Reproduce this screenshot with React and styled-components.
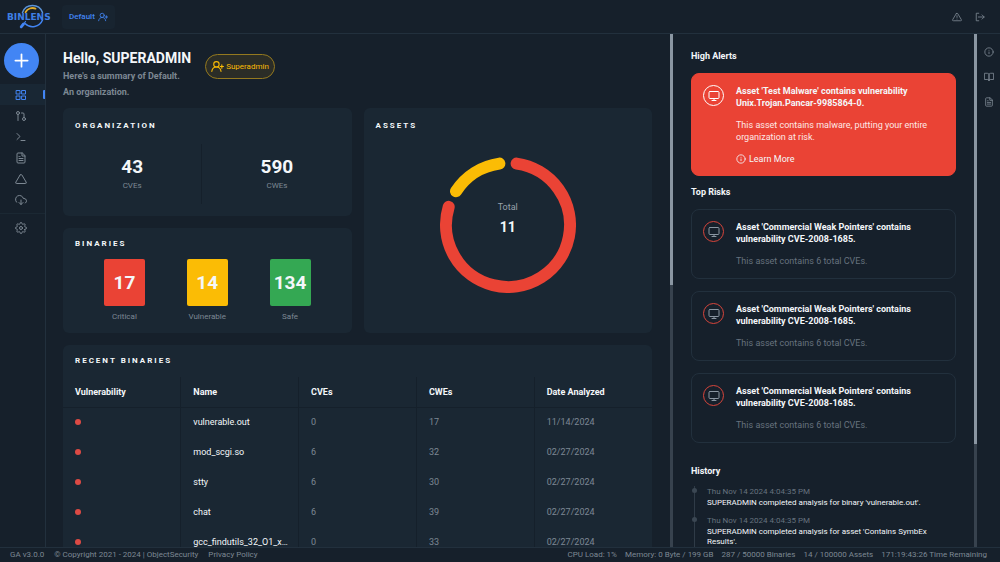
import React from "react";
import styled, { createGlobalStyle, css } from "styled-components";
import {
  FiAlertTriangle,
  FiBookOpen,
  FiDownloadCloud,
  FiFileText,
  FiGitPullRequest,
  FiGrid,
  FiInfo,
  FiMonitor,
  FiPlus,
  FiSettings,
  FiTerminal,
  FiTriangle,
} from "react-icons/fi";

const colors = {
  bg: "#16202b",
  card: "#1a2733",
  line: "#22303d",
  groove: "#15202b",
  text: "#f4f7fa",
  muted: "#7d8893",
  dim: "#66727e",
  blue: "#4285f4",
  red: "#ea4335",
  yellow: "#fbbc05",
  green: "#34a853",
};

const binaries = [
  { name: "vulnerable.out", cves: 0, cwes: 17, date: "11/14/2024" },
  { name: "mod_scgi.so", cves: 6, cwes: 32, date: "02/27/2024" },
  { name: "stty", cves: 6, cwes: 30, date: "02/27/2024" },
  { name: "chat", cves: 6, cwes: 39, date: "02/27/2024" },
  { name: "gcc_findutils_32_O1_xargs", cves: 0, cwes: 33, date: "02/27/2024" },
];

const levels = [
  { label: "Critical", value: 17, color: colors.red },
  { label: "Vulnerable", value: 14, color: colors.yellow },
  { label: "Safe", value: 134, color: colors.green },
];

const navItems = [
  { label: "Dashboard", icon: FiGrid, active: true },
  { label: "Pipelines", icon: FiGitPullRequest },
  { label: "Terminal", icon: FiTerminal },
  { label: "Reports", icon: FiFileText },
  { label: "Alerts", icon: FiTriangle },
  { label: "Downloads", icon: FiDownloadCloud },
];

const risks = [1, 2, 3];

const history = [
  {
    time: "Thu Nov 14 2024 4:04:35 PM",
    text: "SUPERADMIN completed analysis for binary 'vulnerable.out'.",
  },
  {
    time: "Thu Nov 14 2024 4:04:35 PM",
    text: "SUPERADMIN completed analysis for asset 'Contains SymbEx Results'.",
  },
];

const Logo = () => (
  <svg width="44" height="26" viewBox="0 0 44 26" role="img" aria-label="Binlens">
    <g fill="none" strokeLinecap="round">
      <path d="M15.500 8.500A10.700 10.700 0 0 1 35.500 8.500" stroke="#5b93d8" strokeWidth="1.500" />
      <path d="M35.500 16A10.700 10.700 0 0 1 18 19.500" stroke="#4285f4" strokeWidth="1.500" />
      <path d="M18.500 8.200A8 8 0 0 1 28.500 4.600" stroke="#e0ac2b" strokeWidth="1.800" />
      <path d="M16.500 20L14.200 22.800" stroke="#4285f4" strokeWidth="2.800" />
      <path d="M18.500 17.500L17 19.500" stroke="#4285f4" strokeWidth="1.200" />
    </g>
    <text
      x="0"
      y="16"
      fontFamily="'DejaVu Sans', sans-serif"
      fontWeight="700"
      fontSize="9"
      fill="#3f7fe4"
    >
      BINLENS
    </text>
  </svg>
);

const UserAdd = ({ size }) => (
  <svg
    width={size}
    height={size}
    viewBox="0 0 24 24"
    fill="none"
    stroke="currentColor"
    strokeWidth="2"
    strokeLinecap="round"
    strokeLinejoin="round"
    aria-hidden="true"
  >
    <circle cx="10" cy="8" r="5" />
    <path d="M1.5 21c.6-4.800 4.200-8 8.500-8s7.900 3.200 8.500 8" />
    <path d="M20 9v6M17 12h6" />
  </svg>
);

const Exit = () => (
  <svg
    width="10"
    height="10"
    viewBox="0 0 24 24"
    fill="none"
    stroke="currentColor"
    strokeWidth="2"
    strokeLinecap="round"
    strokeLinejoin="round"
    aria-hidden="true"
  >
    <path d="M9 3H3v18h6" />
    <path d="M8 12h14M17 7l5 5-5 5" />
  </svg>
);

// angles are in degrees, clockwise from the top of the ring
const arc = (from, to) => {
  const point = (deg) => {
    const rad = ((deg - 90) * Math.PI) / 180;
    return `${68 + 62 * Math.cos(rad)} ${68 + 62 * Math.sin(rad)}`;
  };
  return `M${point(from)}A62 62 0 ${to - from > 180 ? 1 : 0} 1 ${point(to)}`;
};

const App = () => (
  <Page>
    <GlobalStyle />
    <TopBar>
      <Logo />
      <OrgButton type="button">
        Default <UserAdd size={10} />
      </OrgButton>
      <TopActions>
        <IconButton type="button" aria-label="Warnings">
          <FiAlertTriangle />
        </IconButton>
        <IconButton type="button" aria-label="Log out">
          <Exit />
        </IconButton>
      </TopActions>
    </TopBar>

    <Body>
      <Sidebar>
        <AddButton type="button" aria-label="Add">
          <FiPlus />
        </AddButton>
        {navItems.map(({ label, icon: Icon, active }) => (
          <NavButton key={label} type="button" aria-label={label} $active={active}>
            <Icon />
          </NavButton>
        ))}
        <NavDivider />
        <NavButton type="button" aria-label="Settings">
          <FiSettings />
        </NavButton>
      </Sidebar>

      <Main>
        <Greeting>
          <div>
            <Title>Hello, SUPERADMIN</Title>
            <Subtitle>Here's a summary of Default.</Subtitle>
            <Subtitle>An organization.</Subtitle>
          </div>
          <RoleTag>
            <UserAdd size={13} /> Superadmin
          </RoleTag>
        </Greeting>

        <Summary>
          <Column>
            <Card>
              <CardTitle>Organization</CardTitle>
              <Stats>
                <Stat>
                  <StatValue>43</StatValue>
                  <Caption>CVEs</Caption>
                </Stat>
                <Stat>
                  <StatValue>590</StatValue>
                  <Caption>CWEs</Caption>
                </Stat>
              </Stats>
            </Card>
            <Card $dense>
              <CardTitle>Binaries</CardTitle>
              <Levels>
                {levels.map((level) => (
                  <Level key={level.label}>
                    <LevelBox $color={level.color}>{level.value}</LevelBox>
                    <Caption>{level.label}</Caption>
                  </Level>
                ))}
              </Levels>
            </Card>
          </Column>
          <Card>
            <CardTitle>Assets</CardTitle>
            <ChartArea>
              <Ring>
                <svg width="136" height="136" viewBox="0 0 136 136" fill="none" strokeWidth="12" strokeLinecap="round" aria-hidden="true">
                  <path d={arc(8, 287)} stroke={colors.red} />
                  <path d={arc(303, 352)} stroke={colors.yellow} />
                </svg>
                <RingLabel>
                  <span>Total</span>
                  <strong>11</strong>
                </RingLabel>
              </Ring>
            </ChartArea>
          </Card>
        </Summary>

        <TableCard>
          <CardTitle>Recent Binaries</CardTitle>
          <Table>
            <thead>
              <tr>
                <th>Vulnerability</th>
                <th>Name</th>
                <th>CVEs</th>
                <th>CWEs</th>
                <th>Date Analyzed</th>
              </tr>
            </thead>
            <tbody>
              {binaries.map((row) => (
                <tr key={row.name}>
                  <td>
                    <Dot />
                  </td>
                  <NameCell>{row.name}</NameCell>
                  <td>{row.cves}</td>
                  <td>{row.cwes}</td>
                  <td>{row.date}</td>
                </tr>
              ))}
            </tbody>
          </Table>
        </TableCard>
      </Main>
      <Track>
        <Thumb $size="49%" />
      </Track>

      <Aside>
        <SectionTitle>High Alerts</SectionTitle>
        <Alert $filled>
          <AlertIcon $filled>
            <FiMonitor />
          </AlertIcon>
          <AlertBody>
            <AlertTitle>Asset 'Test Malware' contains vulnerability Unix.Trojan.Pancar-9985864-0.</AlertTitle>
            <AlertText $filled>This asset contains malware, putting your entire organization at risk.</AlertText>
            <LearnMore href="#learn">
              <FiInfo /> Learn More
            </LearnMore>
          </AlertBody>
        </Alert>

        <SectionTitle>Top Risks</SectionTitle>
        <RiskList>
          {risks.map((id) => (
            <Alert key={id}>
              <AlertIcon>
                <FiMonitor />
              </AlertIcon>
              <AlertBody>
                <AlertTitle>Asset 'Commercial Weak Pointers' contains vulnerability CVE-2008-1685.</AlertTitle>
                <AlertText>This asset contains 6 total CVEs.</AlertText>
              </AlertBody>
            </Alert>
          ))}
        </RiskList>

        <HistoryTitle>History</HistoryTitle>
        <Timeline>
          {history.map((item) => (
            <Event key={item.text}>
              <time>{item.time}</time>
              <p>{item.text}</p>
            </Event>
          ))}
        </Timeline>
      </Aside>
      <Track>
        <Thumb $size="80%" />
      </Track>

      <Rail>
        <IconButton type="button" aria-label="Information">
          <FiInfo />
        </IconButton>
        <IconButton type="button" aria-label="Documentation">
          <FiBookOpen />
        </IconButton>
        <IconButton type="button" aria-label="Notes">
          <FiFileText />
        </IconButton>
      </Rail>
    </Body>

    <Footer>
      <span>GA v3.0.0</span>
      <span>© Copyright 2021 - 2024 | ObjectSecurity</span>
      <a href="#privacy">Privacy Policy</a>
      <FooterStats>
        <span>CPU Load: 1%</span>
        <span>Memory: 0 Byte / 199 GB</span>
        <span>287 / 50000 Binaries</span>
        <span>14 / 100000 Assets</span>
        <span>171:19:43:26 Time Remaining</span>
      </FooterStats>
    </Footer>
  </Page>
);

const GlobalStyle = createGlobalStyle`
  * {
    box-sizing: border-box;
  }
  body {
    margin: 0;
    background: ${colors.bg};
    color: ${colors.text};
    font-family: Roboto, "Liberation Sans", sans-serif;
    font-size: 9px;
    line-height: 12px;
  }
  h1, h2, h3, p {
    margin: 0;
  }
  button {
    font: inherit;
    border: none;
    background: none;
    padding: 0;
    cursor: pointer;
  }
  a {
    color: inherit;
    text-decoration: none;
  }
  svg {
    flex: none;
  }
`;

const Page = styled.div`
  height: 100vh;
  display: flex;
  flex-direction: column;
  overflow: hidden;
`;

const TopBar = styled.header`
  flex: none;
  height: 34px;
  display: flex;
  align-items: center;
  gap: 11px;
  padding: 0 15px 0 7px;
  border-bottom: 1px solid ${colors.line};
`;

const OrgButton = styled.button`
  display: flex;
  align-items: center;
  gap: 3px;
  height: 24px;
  padding: 0 7px;
  border-radius: 4px;
  background: #182430;
  color: ${colors.blue};
  font-size: 8px;
  font-weight: 500;
`;

const TopActions = styled.div`
  display: flex;
  gap: 13px;
  margin-left: auto;
`;

const IconButton = styled.button`
  display: flex;
  color: ${colors.muted};
  font-size: 10px;
`;

const Body = styled.div`
  flex: 1;
  min-height: 0;
  display: flex;
`;

const Sidebar = styled.nav`
  flex: none;
  width: 46px;
  display: flex;
  flex-direction: column;
  padding-top: 9px;
  border-right: 1px solid ${colors.line};
`;

const AddButton = styled.button`
  display: grid;
  place-items: center;
  width: 35px;
  height: 35px;
  margin: 0 0 6px 4px;
  border-radius: 50%;
  background: ${colors.blue};
  color: #fff;
  font-size: 21px;
`;

const NavButton = styled.button`
  display: flex;
  align-items: center;
  height: 21px;
  padding-left: 15px;
  color: ${colors.muted};
  font-size: 12px;

  ${(props) =>
    props.$active &&
    css`
      color: ${colors.blue};
      background: #192734;

      &::after {
        content: "";
        width: 2px;
        height: 9px;
        margin-left: auto;
        border-radius: 1px 0 0 1px;
        background: ${colors.blue};
      }
    `}
`;

const NavDivider = styled.div`
  height: 1px;
  margin: 3px 0;
  background: #1b2833;
`;

const Main = styled.main`
  flex: 1;
  min-width: 0;
  overflow: hidden;
  padding: 15px 18px 0 17px;
`;

const Greeting = styled.div`
  display: flex;
  align-items: flex-start;
  gap: 14px;
  margin-bottom: 8px;
`;

const Title = styled.h1`
  font-size: 14px;
  line-height: 19px;
`;

const Subtitle = styled.p`
  color: ${colors.muted};
  font-weight: 700;
  line-height: 16px;
`;

const RoleTag = styled.span`
  display: flex;
  align-items: center;
  gap: 2px;
  height: 25px;
  margin-top: 5px;
  padding: 0 5px;
  border: 1px solid #94791f;
  border-radius: 13px;
  background: #2b2d27;
  color: ${colors.yellow};
  font-size: 8px;
`;

const Summary = styled.div`
  display: grid;
  grid-template-columns: 1fr 1fr;
  gap: 12px;
  margin-bottom: 12px;
`;

const Column = styled.div`
  display: grid;
  gap: 12px;
`;

const Card = styled.section`
  display: flex;
  flex-direction: column;
  padding: ${(props) => (props.$dense ? "10px 12px" : "12px")};
  border-radius: 6px;
  background: ${colors.card};
`;

const CardTitle = styled.h2`
  font-size: 8px;
  line-height: 12px;
  letter-spacing: 2px;
  text-transform: uppercase;
`;

const Stats = styled.div`
  display: flex;
  margin: 12px -12px 0;
`;

const Stat = styled.div`
  flex: 1 1 auto;
  display: flex;
  flex-direction: column;
  align-items: center;
  padding: 10px 0 12px;

  & + & {
    border-left: 1px solid ${colors.groove};
  }
`;

const StatValue = styled.strong`
  font-size: 19px;
  line-height: 26px;
`;

const Caption = styled.span`
  color: ${colors.muted};
  font-size: 8px;
  line-height: 12px;
`;

const Levels = styled.div`
  display: flex;
  justify-content: space-around;
  padding: 9px 8px 0;
`;

const Level = styled.div`
  display: flex;
  flex-direction: column;
  align-items: center;
  gap: 5px;
  width: 41px;
`;

const LevelBox = styled.div`
  display: grid;
  place-items: center;
  width: 41px;
  height: 47px;
  border-radius: 2px;
  background: ${(props) => props.$color};
  font-size: 19px;
  font-weight: 700;
`;

const ChartArea = styled.div`
  flex: 1;
  display: grid;
  place-items: center;
  padding-bottom: 4px;
`;

const Ring = styled.div`
  display: grid;
  place-items: center;

  > * {
    grid-area: 1 / 1;
  }
`;

const RingLabel = styled.div`
  display: flex;
  flex-direction: column;
  align-items: center;
  gap: 5px;
  padding-bottom: 12px;

  span {
    color: #98a2ac;
  }
  strong {
    font-size: 14px;
    line-height: 19px;
  }
`;

const TableCard = styled(Card)`
  padding: 10px 0 0;

  ${CardTitle} {
    padding: 0 12px;
  }
`;

const Table = styled.table`
  width: 100%;
  margin-top: 10px;
  table-layout: fixed;
  border-collapse: collapse;

  th,
  td {
    height: 30px;
    padding: 0 8px 0 12px;
    text-align: left;
    border-right: 1px solid ${colors.groove};
  }
  th {
    border-bottom: 1px solid ${colors.groove};
  }
  td {
    color: ${colors.muted};
  }
  th:last-child,
  td:last-child {
    border-right: none;
  }
`;

const NameCell = styled.td`
  && {
    color: ${colors.text};
    overflow: hidden;
    white-space: nowrap;
    text-overflow: ellipsis;
  }
`;

const Dot = styled.span`
  display: block;
  width: 6px;
  height: 6px;
  border-radius: 50%;
  background: #dc4a44;
`;

const Track = styled.div`
  flex: none;
  width: 3px;
  background: #37424e;
`;

const Thumb = styled.div`
  height: ${(props) => props.$size};
  background: #8a96a2;
`;

const Aside = styled.aside`
  flex: none;
  width: 301px;
  overflow: hidden;
  padding: 16px 18px 0 18px;
`;

const SectionTitle = styled.h2`
  font-size: 9px;
  line-height: 12px;
  margin-bottom: 11px;
`;

const HistoryTitle = styled(SectionTitle)`
  margin: 22px 0 9px;
`;

const Alert = styled.article`
  display: flex;
  align-items: flex-start;
  gap: 12px;
  padding: 11px;
  border: 1px solid ${colors.line};
  border-radius: 8px;

  ${(props) =>
    props.$filled &&
    css`
      margin-bottom: 10px;
      padding-bottom: 10px;
      border-color: ${colors.red};
      background: ${colors.red};
    `}
`;

const AlertIcon = styled.span`
  flex: none;
  display: grid;
  place-items: center;
  width: 21px;
  height: 21px;
  border: 1px solid ${(props) => (props.$filled ? "#fff" : "#d8453b")};
  border-radius: 50%;
  color: ${(props) => (props.$filled ? "#fff" : "#8a96a2")};
  font-size: 12px;
`;

const AlertBody = styled.div`
  flex: 1;
  display: flex;
  flex-direction: column;
  gap: 10px;
`;

const AlertTitle = styled.h3`
  font-size: 9px;
  line-height: 12px;
`;

const AlertText = styled.p`
  color: ${(props) => (props.$filled ? "#fde8e6" : colors.dim)};
`;

const LearnMore = styled.a`
  display: flex;
  align-items: center;
  gap: 3px;

  svg {
    font-size: 10px;
  }
`;

const RiskList = styled.div`
  display: grid;
  gap: 12px;
`;

const Timeline = styled.div`
  display: flex;
  flex-direction: column;
  margin-left: 3px;
`;

const Event = styled.div`
  position: relative;
  padding: 0 0 7px 12px;
  border-left: 1px solid #2f3b47;

  &::before {
    content: "";
    position: absolute;
    top: 2px;
    left: -3px;
    width: 5px;
    height: 5px;
    border-radius: 50%;
    background: #3b4753;
  }
  time {
    display: block;
    color: ${colors.dim};
    font-size: 8px;
    line-height: 12px;
  }
  p {
    font-size: 8px;
    line-height: 10px;
  }
`;

const Rail = styled.div`
  flex: none;
  width: 23px;
  display: flex;
  flex-direction: column;
  align-items: center;
  gap: 15px;
  padding-top: 13px;
`;

const Footer = styled.footer`
  flex: none;
  height: 15px;
  display: flex;
  align-items: center;
  gap: 10px;
  padding: 0 13px 0 10px;
  border-top: 1px solid ${colors.line};
  background: ${colors.bg};
  color: ${colors.muted};
  font-size: 8px;
  line-height: 14px;
`;

const FooterStats = styled.div`
  display: flex;
  gap: 8px;
  margin-left: auto;
`;

export default App;
